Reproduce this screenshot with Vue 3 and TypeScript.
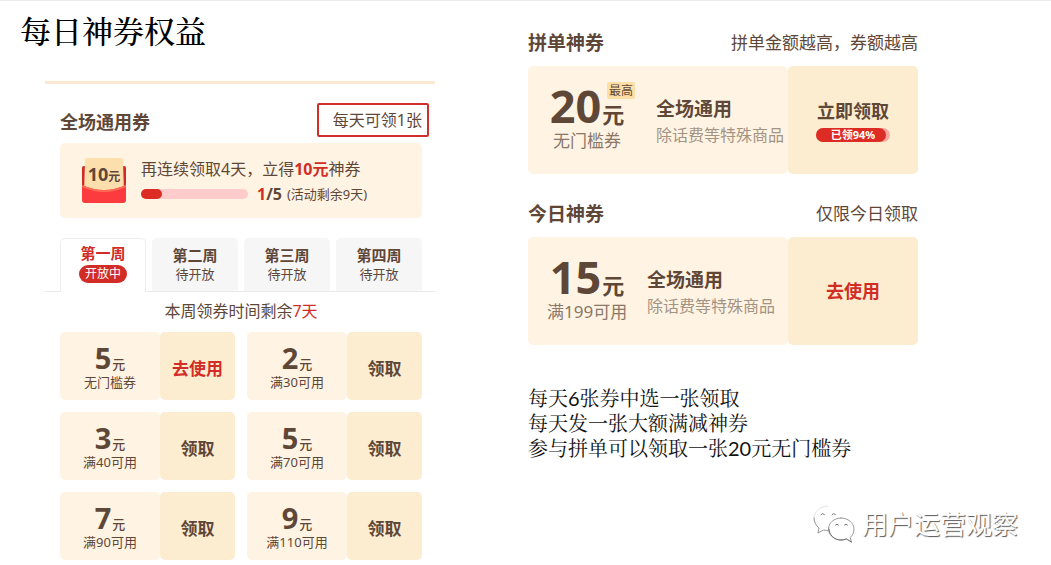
<script setup lang="ts">
import { ref } from 'vue'

interface Week {
  name: string
  status: string
}

interface Coupon {
  amount: number
  rule: string
  action: string
  hot?: boolean
}

const weeks: Week[] = [
  { name: '第一周', status: '开放中' },
  { name: '第二周', status: '待开放' },
  { name: '第三周', status: '待开放' },
  { name: '第四周', status: '待开放' },
]

const coupons: Coupon[] = [
  { amount: 5, rule: '无门槛券', action: '去使用', hot: true },
  { amount: 2, rule: '满30可用', action: '领取' },
  { amount: 3, rule: '满40可用', action: '领取' },
  { amount: 5, rule: '满70可用', action: '领取' },
  { amount: 7, rule: '满90可用', action: '领取' },
  { amount: 9, rule: '满110可用', action: '领取' },
]

const notes: string[] = [
  '每天6张券中选一张领取',
  '每天发一张大额满减神券',
  '参与拼单可以领取一张20元无门槛券',
]

const activeWeek = ref(0)
const claimed = 94
const streak = 1
const streakGoal = 5
</script>

<template>
  <main class="page">
    <section class="left">
      <h1 class="title">每日神券权益</h1>

      <div class="panel">
        <header class="panel-head">
          <h2 class="heading">全场通用券</h2>
          <span class="limit">每天可领1张</span>
        </header>

        <div class="streak">
          <div class="envelope">
            <svg class="envelope-art" viewBox="0 0 44 46" aria-hidden="true">
              <rect x="0" y="8" width="44" height="30" rx="2" fill="#cf2a26" />
              <path d="M5 0h34q2 0 2 2l1 34H2L3 2q0-2 2-2z" fill="#fcdfac" />
              <path d="M0 27q22 10 44 0v15q0 3-3 3H3q-3 0-3-3z" fill="#fb3b3d" />
              <path d="M0 27q22 10 44 0v2q-22 10-44 0z" fill="#fd6a55" />
            </svg>
            <span class="envelope-text">10<small>元</small></span>
          </div>
          <div class="streak-body">
            <p class="streak-line">再连续领取4天，立得<b class="red">10元</b>神券</p>
            <div class="streak-row">
              <span class="bar"><span class="bar-fill" :style="{ width: (streak / streakGoal) * 100 + '%' }"></span></span>
              <span class="count"><b class="red">{{ streak }}</b><b>/{{ streakGoal }}</b></span>
              <span class="remain">(活动剩余9天)</span>
            </div>
          </div>
        </div>

        <div class="tabs" role="tablist">
          <button
            v-for="(week, i) in weeks"
            :key="week.name"
            type="button"
            role="tab"
            class="tab"
            :class="{ active: i === activeWeek }"
            :aria-selected="i === activeWeek"
            @click="activeWeek = i"
          >
            <span class="tab-name">{{ week.name }}</span>
            <span class="tab-status">{{ week.status }}</span>
          </button>
        </div>

        <p class="timer">本周领券时间剩余<span class="red">7天</span></p>

        <div class="coupons">
          <article v-for="(c, i) in coupons" :key="i" class="coupon">
            <div class="coupon-info">
              <p class="coupon-amount">{{ c.amount }}<small>元</small></p>
              <p class="coupon-rule">{{ c.rule }}</p>
            </div>
            <button type="button" class="coupon-action" :class="{ red: c.hot }">{{ c.action }}</button>
          </article>
        </div>
      </div>
    </section>

    <section class="right">
      <header class="row-head">
        <h2 class="heading large">拼单神券</h2>
        <span class="hint">拼单金额越高，券额越高</span>
      </header>
      <article class="ticket">
        <div class="ticket-info roomy">
          <div class="value">
            <p class="value-amount">20<small>元</small><span class="tag">最高</span></p>
            <p class="value-rule">无门槛券</p>
          </div>
          <div class="scope">
            <p class="scope-name">全场通用</p>
            <p class="scope-note">除话费等特殊商品</p>
          </div>
        </div>
        <button type="button" class="ticket-action">
          <span class="action-name">立即领取</span>
          <span class="claimed">
            <span class="claimed-fill" :style="{ width: claimed + '%' }"></span>
            <span class="claimed-text">已领{{ claimed }}%</span>
          </span>
        </button>
      </article>

      <header class="row-head second">
        <h2 class="heading large">今日神券</h2>
        <span class="hint">仅限今日领取</span>
      </header>
      <article class="ticket">
        <div class="ticket-info">
          <div class="value">
            <p class="value-amount">15<small>元</small></p>
            <p class="value-rule">满199可用</p>
          </div>
          <div class="scope">
            <p class="scope-name">全场通用</p>
            <p class="scope-note">除话费等特殊商品</p>
          </div>
        </div>
        <button type="button" class="ticket-action">
          <span class="action-name red">去使用</span>
        </button>
      </article>

      <div class="notes">
        <p v-for="n in notes" :key="n">{{ n }}</p>
      </div>
    </section>

    <div class="watermark">
      <svg class="chat" viewBox="0 0 42 38" aria-hidden="true">
        <g fill="#fff" stroke-linecap="round" stroke-linejoin="round">
          <path d="M15 1C7 1 1 6.500 1 13.500c0 4 2 7 5 9.500l-1 5 5-3c2 .7 4 1 6 1" stroke="#e2e2e2" />
          <path d="M1 13c0 4 2 7.500 5 10l-1 5 5.500-3q3 .5 5.500.5" stroke="#999" />
          <path d="M28 13c-7 0-12.500 5-12.500 11S21 35 28 35c2 0 4-.4 5.500-1l5 3-1.300-4.500C39.500 30.500 41 27.500 41 24c0-6-6-11-13-11z" stroke="#9a9a9a" />
        </g>
        <g fill="none" stroke="#777" stroke-linecap="round">
          <path d="M8 9.500q1.500-2 3.500 0M19 9.500q1.500-2 3.500 0M22.500 20q1.500-2 3 0M31.500 20q1.500-2 3 0" />
          <path d="M16 24c0 6 5.500 11 12 11 2 0 4-.4 5.500-1l5 3" />
        </g>
      </svg>
      <span>用户运营观察</span>
    </div>
  </main>
</template>

<style>
body {
  margin: 0;
  background: #fff;
}
</style>

<style scoped>
.page {
  position: relative;
  display: grid;
  grid-template-columns: 415fr 390fr;
  column-gap: 93px;
  padding: 0 133px 5px 20px;
  border-top: 1px solid #ececec;
  color: #5f4738;
  font-family: "Noto Sans", "Noto Sans CJK SC", sans-serif;
}
h1, h2, p {
  margin: 0;
}
small {
  line-height: 1;
}
button {
  margin: 0;
  padding: 0;
  border: 0;
  color: inherit;
  font-family: inherit;
  cursor: pointer;
}
.red {
  color: #d12d26;
}
.title {
  margin-top: 10px;
  color: #000;
  font-family: "Liberation Serif", "Noto Serif CJK SC", "Noto Sans CJK SC", serif;
  font-size: 31px;
  font-weight: 500;
  line-height: 44px;
}
.panel {
  margin: 26px 0 0 25px;
  padding: 19px 13px 0 15px;
  border-top: 3px solid #fbe8d0;
}
.panel-head {
  display: flex;
  justify-content: space-between;
  align-items: flex-end;
  margin-right: -7px;
}
.heading {
  font-size: 18px;
  font-weight: 700;
  line-height: 30px;
}
.heading.large {
  font-size: 19px;
}
.limit {
  padding: 0 5px 0 14px;
  border: 2px solid #d0302b;
  border-radius: 2px;
  font-size: 16px;
  line-height: 30px;
}
.streak {
  display: flex;
  align-items: center;
  gap: 15px;
  height: 75px;
  margin-top: 6px;
  padding-left: 22px;
  border-radius: 5px;
  background: #fff4e3;
}
.envelope {
  position: relative;
  width: 44px;
  height: 46px;
}
.envelope-art {
  display: block;
  width: 44px;
  height: 46px;
}
.envelope-text {
  position: absolute;
  inset: 4px 0 auto;
  font-size: 18px;
  font-weight: 700;
  line-height: 24px;
  text-align: center;
}
.envelope-text small {
  font-size: 12px;
}
.streak-line {
  font-size: 16px;
  line-height: 26px;
  white-space: nowrap;
}
.streak-row {
  display: flex;
  align-items: center;
  line-height: 24px;
}
.bar {
  width: 107px;
  height: 10px;
  border-radius: 5px;
  background: #ffcccb;
}
.bar-fill {
  display: block;
  height: 10px;
  border-radius: 5px;
  background: #dc2c24;
}
.count {
  margin: 0 5px 0 9px;
  font-size: 16px;
}
.remain {
  font-size: 13px;
}
.tabs {
  display: grid;
  grid-template-columns: repeat(4, 1fr);
  gap: 6px;
  margin: 20px -13px 0 -15px;
  padding: 0 13px 0 15px;
  border-bottom: 1px solid #e9e9e9;
}
.tab {
  display: flex;
  flex-direction: column;
  align-items: center;
  height: 53px;
  padding-top: 7px;
  border-radius: 5px 5px 0 0;
  background: #f6f6f6;
}
.tab-name {
  font-size: 15px;
  font-weight: 700;
  line-height: 20px;
}
.tab-status {
  font-size: 13px;
  line-height: 18px;
}
.tab.active {
  height: 54px;
  margin-bottom: -1px;
  padding-top: 4px;
  border: 1px solid #eee;
  border-bottom: 0;
  background: #fff;
}
.tab.active .tab-name {
  color: #d12d26;
}
.tab.active .tab-status {
  margin-top: 2px;
  padding: 0 6px;
  border-radius: 9px;
  background: #d12d26;
  color: #fff;
  font-size: 12px;
}
.timer {
  margin: 7px 0 9px;
  font-size: 16px;
  line-height: 24px;
  text-align: center;
}
.coupons {
  display: grid;
  grid-template-columns: 1fr 1fr;
  gap: 12px;
}
.coupon {
  display: grid;
  grid-template-columns: 4fr 3fr;
  height: 68px;
}
.coupon-info,
.coupon-action {
  border-radius: 5px;
}
.coupon-info {
  padding-top: 11px;
  background: #fff4e3;
  text-align: center;
}
.coupon-amount {
  font-size: 29px;
  font-weight: 700;
  line-height: 30px;
}
.coupon-amount small {
  margin-left: 1px;
  font-size: 13px;
  font-weight: 500;
}
.coupon-rule {
  font-size: 13px;
  line-height: 18px;
}
.coupon-action {
  padding-top: 3px;
  background: #fcedd1;
  font-size: 17px;
  font-weight: 700;
}
.right {
  padding-top: 27px;
}
.row-head {
  display: flex;
  justify-content: space-between;
  align-items: center;
  margin-bottom: 8px;
}
.row-head.second {
  margin-top: 25px;
}
.hint {
  font-size: 17px;
  line-height: 24px;
}
.ticket {
  display: grid;
  grid-template-columns: 2fr 1fr;
  height: 108px;
}
.ticket-info,
.ticket-action {
  border-radius: 5px;
}
.ticket-info {
  display: flex;
  align-items: flex-start;
  gap: 20px;
  padding-left: 19px;
  background: #fff4e3;
  white-space: nowrap;
}
.ticket-info.roomy {
  gap: 29px;
}
.value {
  width: 80px;
  padding-top: 16px;
  text-align: center;
}
.value-amount {
  position: relative;
  font-size: 45px;
  font-weight: 700;
  line-height: 48px;
}
.value-amount small {
  margin-left: 1px;
  font-size: 22px;
}
.tag {
  position: absolute;
  top: 0;
  left: 60px;
  padding: 0 2px;
  border-radius: 2px;
  background: #fbdfa6;
  font-size: 12px;
  font-weight: 400;
  line-height: 17px;
}
.value-rule {
  color: #8b7768;
  font-size: 17px;
  line-height: 22px;
}
.scope {
  padding-top: 30px;
}
.scope-name {
  font-size: 19px;
  font-weight: 700;
  line-height: 26px;
}
.scope-note {
  color: #a39383;
  font-size: 16px;
  line-height: 26px;
}
.ticket-action {
  display: flex;
  flex-direction: column;
  align-items: center;
  justify-content: center;
  gap: 4px;
  background: #fcedd1;
}
.action-name {
  font-size: 18px;
  font-weight: 700;
  line-height: 26px;
}
.claimed {
  position: relative;
  width: 74px;
  height: 14px;
  border-radius: 7px;
  background: #f6a9a0;
}
.claimed-fill {
  display: block;
  height: 14px;
  border-radius: 7px;
  background: #dc2c24;
}
.claimed-text {
  position: absolute;
  inset: 0;
  color: #fff;
  font-size: 11px;
  font-weight: 700;
  line-height: 14px;
}
.notes {
  margin-top: 41px;
  color: #111;
  font-family: Lato, "Noto Serif CJK SC", "Noto Sans CJK SC", sans-serif;
  font-size: 20px;
  line-height: 25px;
}
.watermark {
  position: absolute;
  right: 33px;
  bottom: 22px;
  display: flex;
  align-items: center;
  gap: 7px;
  color: #fff;
  font-size: 26px;
  line-height: 36px;
  text-shadow: 1px 1px 1px #555;
}
.chat {
  width: 42px;
  height: 38px;
}
</style>
